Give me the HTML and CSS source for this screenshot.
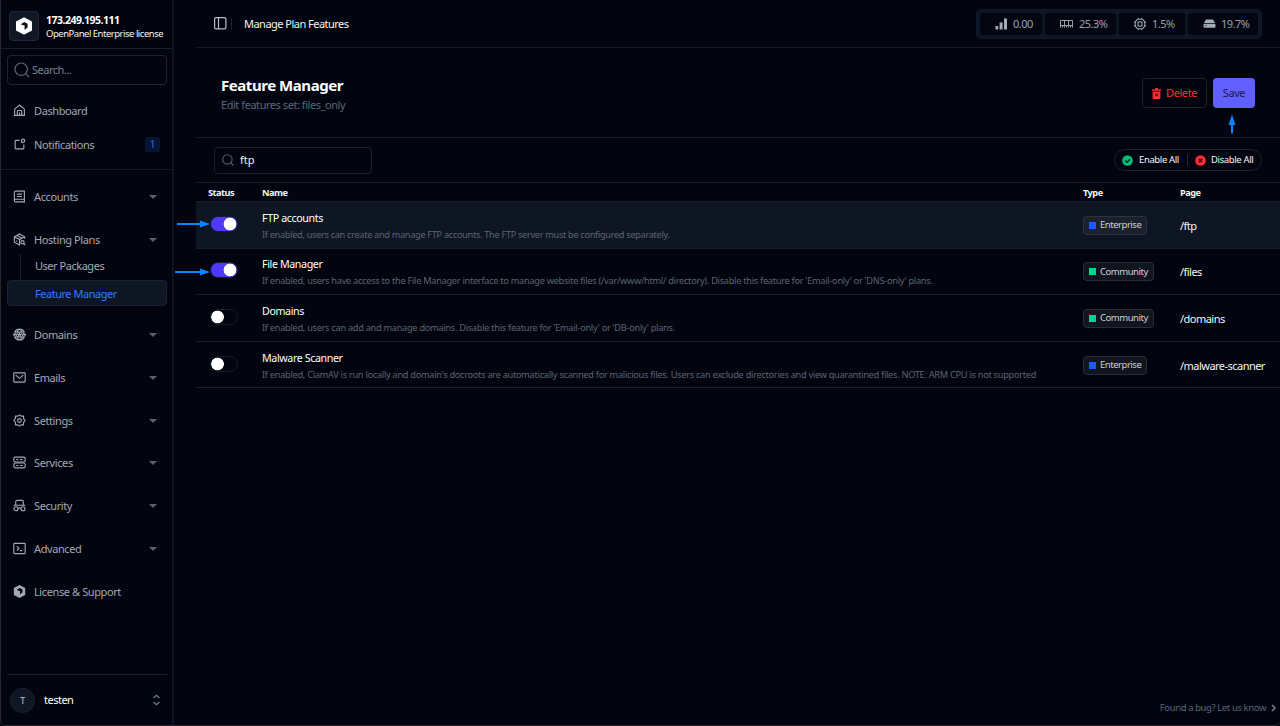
FILE: index.html
```html
<!DOCTYPE html>
<html lang="en">
<head>
<meta charset="utf-8">
<title>Manage Plan Features</title>
<link rel="stylesheet" href="styles.css">
</head>
<body>
<div class="app">
<aside class="sidebar">
  <div class="brand">
    <div class="brand-logo"><svg width="18" height="18" viewBox="0 0 18 18"><path fill="#fff" stroke="#fff" stroke-width="1.6" stroke-linejoin="round" d="M9 1.2 16.2 5v8L9 16.8 1.8 13V5z"/><path fill="#0b1220" d="M5.6 7.2 9.3 5l3.3 1.8v3.8l-3 2.3V8.6L7.4 7.9z"/></svg></div>
    <div class="brand-text"><strong><span class="t-ip">173.249.195.111</span></strong><span class="t-lic">OpenPanel Enterprise license</span></div>
  </div>
  <div class="side-search"><svg width="16" height="16" viewBox="0 0 16 16" fill="none" stroke="#5b6475" stroke-width="1.2"><circle cx="7.2" cy="7.2" r="6.2"/><path d="m11.7 11.7 3.6 3.6"/></svg><span>Search...</span></div>
  <nav class="nav">
    <a class="item dash"><svg class="ico" viewBox="0 0 24 24"><path d="M3 21V9.500L12 2l9 7.500V21zM8 21v-7.500q0-1.500 1.500-1.500h5q1.500 0 1.500 1.500V21M12 15.500V21"/></svg><span>Dashboard</span></a>
    <a class="item notif"><svg class="ico" viewBox="0 0 24 24"><path d="M12 4.500H5q-1 0-1 1V19q0 1 1 1h14q1 0 1-1v-7"/><circle cx="18.500" cy="5" r="3"/></svg><span>Notifications</span><b class="count">1</b></a>
    <hr class="rule">
    <a class="item first"><svg class="ico" viewBox="0 0 24 24"><path d="M5 2h16v20H5q-2.500 0-2.500-2.500V4.500Q2.500 2 5 2zM2.500 19.500Q2.500 17 5 17h16M7.500 7.500h9M7.500 12h9"/></svg><span>Accounts</span><i class="caret"></i></a>
    <a class="item"><svg class="ico" viewBox="0 0 24 24"><path d="M21.500 10.500V7L12 1.800 2.500 7v10l9.500 5.200V12M2.500 7l9.500 5 9.500-5M7.500 4.500l9 5M7 14v2"/><circle cx="17.500" cy="17" r="3"/><path d="m19.700 19.200 3 3"/></svg><span>Hosting Plans</span><i class="caret"></i></a>
    <div class="sub">
      <a class="sub-item">User Packages</a>
      <a class="sub-item active">Feature Manager</a>
    </div>
    <a class="item"><svg class="ico" viewBox="0 0 24 24"><path d="M3 7.500a10 10 0 0 1 18 0M3 16.500a10 10 0 0 0 18 0M8 7.500q1-5 4-5.500 3 .5 4 5.500M8 16.500q1 5 4 5.500 3-.5 4-5.500M2.500 7.500h19M2.500 16.500h19"/><path stroke-width="2" d="m0 10 2 4 2-4 2 4 2-4M8.500 10l2 4 1.500-4 1.500 4 2-4M16 10l2 4 2-4 2 4 2-4"/></svg><span>Domains</span><i class="caret"></i></a>
    <a class="item"><svg class="ico" viewBox="0 0 24 24"><rect x="1.500" y="3.500" width="21" height="17" rx="1.500"/><path d="m5 7.500 7 6 7-6"/></svg><span>Emails</span><i class="caret"></i></a>
    <a class="item"><svg class="ico" viewBox="0 0 24 24"><path stroke-linejoin="round" d="m12 1.500 3 2.500h4.500v4.500L22.500 12l-3 3.500V20H15l-3 2.500L9 20H4.500v-4.500L1.500 12l3-3.500V4H9z"/><circle cx="12" cy="12" r="3.500"/></svg><span>Settings</span><i class="caret"></i></a>
    <a class="item"><svg class="ico" viewBox="0 0 24 24"><rect x="1.500" y="2" width="21" height="9" rx="3"/><rect x="1.500" y="13" width="21" height="9" rx="3"/><path d="M6 6.500h4M6 17.500h4M13 6.500h5M13 17.500h5"/></svg><span>Services</span><i class="caret"></i></a>
    <a class="item"><svg class="ico" viewBox="0 0 24 24"><path d="M5 11V5.500Q5 2.500 7.500 2.500h9Q19 2.500 19 5.500V11M1 11.500h22M9.500 17.500q2.500-2 5 0"/><circle cx="5.500" cy="18" r="3.700"/><circle cx="18.500" cy="18" r="3.700"/></svg><span>Security</span><i class="caret"></i></a>
    <a class="item"><svg class="ico" viewBox="0 0 24 24"><rect x="1.500" y="2.500" width="21" height="19" rx="1.500"/><path d="m7 8 4 4-4 4M12.500 16H17"/></svg><span>Advanced</span><i class="caret"></i></a>
    <a class="item"><svg class="ico" viewBox="0 0 24 24"><path class="solid" d="M12 0 22.500 5.500v13L12 24 1.500 18.500v-13z"/><path class="hole" d="m7 8.700 5.500-3 5 2.600v5.300L13 17.500V11l-3.500-1z"/></svg><span>License &amp; Support</span></a>
  </nav>
  <div class="user"><div class="avatar">T</div><span>testen</span><svg width="9" height="12" viewBox="0 0 9 12" fill="none" stroke="#737c8d" stroke-width="1.100"><path d="m1.500 4 3-2.700 3 2.700M1.500 8l3 2.700 3-2.700"/></svg></div>
</aside>
<main class="main">
  <header class="topbar">
    <svg width="13" height="13" viewBox="0 0 13 13" fill="none" stroke="#b8bdc6" stroke-width="1.200"><rect x=".6" y=".6" width="11.300" height="11.300" rx="1.500"/><path d="M4.500.6v11.300"/></svg>
    <i class="vbar"></i>
    <span class="crumb">Manage Plan Features</span>
    <div class="stats">
      <div class="stat s1"><svg width="13" height="12" viewBox="0 0 13 12" fill="#a4abb8"><path d="M.5 8h2.800v3.500H.5zM4.600 4.500h3v7h-3zM9 .5h3v11H9z"/></svg><span>0.00</span></div>
      <div class="stat s2"><svg width="13" height="10" viewBox="0 0 13 10" fill="none" stroke="#98a0ae"><path d="M.5 1.500h12v5H.5zM4.500 1v5.500M8.500 1v5.500M.5 6v2.500M2.500 6v2.500M4.500 6v2.500M8.500 6v2.500M10.500 6v2.500M12.500 6v2.500M6.500 6v2.500"/></svg><span>25.3%</span></div>
      <div class="stat s3"><svg width="12" height="12" viewBox="0 0 12 12" fill="none" stroke="#98a0ae" stroke-width="1.100"><path d="M3.500 1.300h5l2.200 2.200v5l-2.200 2.200h-5L1.300 8.500v-5z"/><rect x="4" y="4" width="4" height="4"/><path d="M4.500 0v1M7.500 0v1M4.500 11v1M7.500 11v1M0 4.500h1M0 7.500h1M11 4.500h1M11 7.500h1"/></svg><span>1.5%</span></div>
      <div class="stat s4"><svg width="13" height="9" viewBox="0 0 13 9"><path fill="#a4abb8" d="M3 .5h7L12 4H1zM1.500 4.700h10q1 0 1 1v2q0 1-1 1h-10q-1 0-1-1v-2q0-1 1-1z"/><path stroke="#3b4353" d="M2 6.700h1.500"/></svg><span>19.7%</span></div>
    </div>
  </header>
  <section class="heading">
    <div class="titles"><h1><span class="t-h1">Feature Manager</span></h1><p><span class="t-sub">Edit features set: files_only</span></p></div>
    <div class="actions">
      <button class="btn delete"><svg width="9" height="11" viewBox="0 0 9 11"><path fill="#fb2c36" d="M3 0h3v1.300h3v1.500H0V1.300h3zM.6 3.500h7.800V10q0 1-1 1H1.600q-1 0-1-1z"/><path stroke="#1a0410" stroke-width="1" d="m3.200 5.500 2.600 2.800M5.800 5.500 3.200 8.300"/></svg><span>Delete</span></button>
      <button class="btn save"><span>Save</span></button>
    </div>
  </section>
  <section class="tools">
    <div class="filter"><svg width="12" height="12" viewBox="0 0 12 12" fill="none" stroke="#515b6d" stroke-width="1.100"><circle cx="5.400" cy="5.400" r="4.700"/><path d="m8.700 8.700 2.800 2.800"/></svg><span>ftp</span></div>
    <div class="bulk">
      <svg width="11" height="11" viewBox="0 0 11 11"><circle cx="5.500" cy="5.500" r="5.300" fill="#00bc7d"/><path fill="none" stroke="#04251f" stroke-width="1.400" d="M3.200 5.600 4.900 7.200 7.900 4.200"/></svg><span class="t-en">Enable All</span><i></i>
      <svg width="11" height="11" viewBox="0 0 11 11"><circle cx="5.500" cy="5.500" r="5.300" fill="#fb2c36"/><path stroke="#3a0713" stroke-width="1.300" d="m3.800 3.800 3.400 3.400M7.200 3.800 3.800 7.200"/></svg><span class="t-dis">Disable All</span>
    </div>
  </section>
  <div class="table">
    <div class="row head"><span>Status</span><span>Name</span><span>Type</span><span>Page</span></div>
    <div class="row hover"><i class="toggle on"></i><div class="feat"><b>FTP accounts</b><small><span class="d1">If enabled, users can create and manage FTP accounts. The FTP server must be configured separately.</span></small></div><div><span class="tag ent">Enterprise</span></div><span class="page">/ftp</span></div>
    <div class="row"><i class="toggle on"></i><div class="feat"><b>File Manager</b><small><span class="d2">If enabled, users have access to the File Manager interface to manage website files (/var/www/html/ directory). Disable this feature for 'Email-only' or 'DNS-only' plans.</span></small></div><div><span class="tag com">Community</span></div><span class="page">/files</span></div>
    <div class="row"><i class="toggle"></i><div class="feat"><b>Domains</b><small><span class="d3">If enabled, users can add and manage domains. Disable this feature for 'Email-only' or 'DB-only' plans.</span></small></div><div><span class="tag com">Community</span></div><span class="page">/domains</span></div>
    <div class="row"><i class="toggle"></i><div class="feat"><b>Malware Scanner</b><small><span class="d4">If enabled, ClamAV is run locally and domain's docroots are automatically scanned for malicious files. Users can exclude directories and view quarantined files. NOTE: ARM CPU is not supported</span></small></div><div><span class="tag ent">Enterprise</span></div><span class="page">/malware-scanner</span></div>
  </div>
  <footer class="bug"><span>Found a bug? Let us know</span><svg width="5" height="8" viewBox="0 0 5 8" fill="none" stroke="#8791a3" stroke-width="1.200"><path d="m1 1 3 3-3 3"/></svg></footer>
</main>
<svg class="pointer p1" width="35" height="8" viewBox="0 0 35 8"><path fill="#0a84ff" d="M1 3h23V.5L34 4 24 7.500V5H1z"/></svg>
<svg class="pointer p2" width="37" height="8" viewBox="0 0 37 8"><path fill="#0a84ff" d="M1 3h25V.5L36 4 26 7.500V5H1z"/></svg>
<svg class="pointer p3" width="8" height="20" viewBox="0 0 8 20"><path fill="#0a84ff" d="M4 .5 7.500 11H5v8.500H3V11H.5z"/></svg>
</div>
</body>
</html>
```
FILE: styles.css
```css
* { box-sizing: border-box; }
body { margin: 0; background: #030610; color: #f3f4f6; font-family: "Noto Sans", "Open Sans", sans-serif; font-size: 11px; line-height: 14px; }
span { white-space: nowrap; }
svg { flex: none; display: block; }
.app { position: relative; display: flex; width: 1280px; height: 726px; overflow: hidden; border-left: 1px solid #25272d; border-bottom: 1px solid #2b2830; border-radius: 0 0 5px 5px; background: #020510; }

.sidebar { width: 173px; flex: none; display: flex; flex-direction: column; border-right: 2px solid #0d1422; }
.brand { height: 49px; display: flex; align-items: center; padding: 4px 0 0 8px; gap: 7px; border-bottom: 1px solid #182131; }
.brand-logo { width: 30px; height: 30px; display: flex; align-items: center; justify-content: center; background: #101726; border: 1px solid #1e2735; border-radius: 4px; }
.brand-text { display: flex; flex-direction: column; padding-top: 1px; }
.brand-text strong { font-size: 10.500px; line-height: 14px; letter-spacing: -.6px; color: #fff; }
.brand-text strong { letter-spacing: -.5px; }
.t-lic { font-size: 9.500px; line-height: 13px; letter-spacing: -.49px; }
.side-search { height: 30px; margin: 6px 5px 0 6px; padding: 0 0 0 6px; display: flex; align-items: center; gap: 2px; border: 1px solid #1c2433; border-radius: 4px; color: #79818f; letter-spacing: -.5px; }
.nav { padding-top: 14px; }
.item { height: 24px; margin-bottom: 18.750px; padding: 0 15px 0 12px; display: flex; align-items: center; gap: 8px; color: #a2a8b4; font-size: 11px; letter-spacing: -.4px; }
.item.dash { margin-bottom: 9.500px; }
.item.notif { margin-bottom: 0; padding-right: 12px; }
.ico { width: 13px; height: 13px; margin-top: -1px; fill: none; stroke: #a2a8b4; stroke-width: 2.100; }
.ico .solid { fill: #a2a8b4; stroke: none; }
.ico .hole { fill: #020510; stroke: none; }
.caret { margin-left: auto; border: 4px solid transparent; border-top-color: #596273; border-bottom: 0; }
.count { margin-left: auto; width: 15px; height: 15px; line-height: 15px; text-align: center; border-radius: 2px; background: #071532; color: #2b6ff0; font-size: 10px; font-weight: 400; }
.rule { height: 1px; margin: 12.500px 0 15px; border: 0; background: #141c2b; }
.sub { margin: -18px 5px 17.500px 6px; background: linear-gradient(#1a2232, #1a2232) 13px 1px / 1px 27px no-repeat; }
.sub-item { display: block; height: 27px; padding: 0 0 0 28px; line-height: 26px; color: #a2a8b4; letter-spacing: -.47px; }
.sub-item.active { height: 26px; line-height: 25px; background: #0f1623; border: 1px solid #182234; border-radius: 4px; color: #2b7fff; padding-left: 27px; }
.user { margin: auto 5px 0 6px; height: 51px; display: flex; align-items: center; padding: 0 6px 0 3px; border-top: 1px solid #182131; color: #fff; letter-spacing: -.5px; }
.user svg { margin-left: auto; }
.avatar { width: 25px; height: 25px; line-height: 23px; margin-right: 9px; text-align: center; font-size: 9px; border: 1px solid #1a2332; background: #0f1624; border-radius: 50%; color: #bfc4cd; }

.main { flex: 1; margin-left: 22px; display: flex; flex-direction: column; min-width: 0; }
.topbar { height: 48px; display: flex; align-items: center; padding: 0 18px; border-bottom: 1px solid #131a28; }
.vbar { width: 1px; height: 12px; background: #202735; margin: 0 12px 0 4px; }
.crumb { font-size: 11px; letter-spacing: -.52px; }
.stats { margin-left: auto; display: flex; gap: 3px; padding: 3px; background: #0e1624; border-radius: 5px; border: 1px solid #101929; }
.stat { height: 22px; display: flex; align-items: center; gap: 6px; background: #030611; border-radius: 3px; color: #98a0ae; letter-spacing: -.5px; padding: 1px 0 0 16px; }
.stat svg { margin: -1px 0 0 -1px; }
.s1 { width: 62px; } .s2 { width: 71px; } .s3 { width: 66px; } .s4 { width: 70px; }
.s1, .s4 { gap: 5px; }

.heading { height: 90px; display: flex; justify-content: space-between; align-items: center; padding: 0 25px 0 25px; border-bottom: 1px solid #161d2b; }
.titles { padding-top: 3px; }
h1 { margin: 0; font-size: 15px; line-height: 20px; letter-spacing: -.45px; color: #fff; }
p { margin: 2px 0 0; color: #596579; font-size: 11px; line-height: 16px; letter-spacing: -.45px; }
.actions { display: flex; gap: 6px; }
.btn { height: 30px; display: flex; align-items: center; justify-content: center; gap: 5px; font: inherit; letter-spacing: -.42px; border-radius: 4px; padding: 1px 0 0; }
.delete { width: 65px; border: 1px solid #1b2433; background: transparent; color: #fb2c36; }
.save { width: 42px; border: 0; background: #615fff; color: #1b1948; }
.tools { height: 45px; display: flex; align-items: center; justify-content: space-between; padding: 0 18px; border-bottom: 1px solid #161d2b; }
.filter { width: 158px; height: 27px; display: flex; align-items: center; gap: 6px; padding-left: 7px; border: 1px solid #1b2230; border-radius: 4px; }
.bulk { width: 148px; height: 22px; display: flex; align-items: center; padding-left: 7px; border: 1px solid #1b2433; border-radius: 11px; font-size: 9.500px; letter-spacing: -.37px; }
.bulk span { margin-left: 6px; width: 41px; }
.bulk i { width: 1px; height: 12px; background: #242c3b; margin: 0 7px 0 7px; }
.bulk .t-dis { margin-left: 5px; }

.row { height: 46.600px; display: grid; grid-template-columns: 54px 821px 97px 1fr; align-items: center; padding-left: 12px; border-bottom: 1px solid #161f2d; }
.head { height: 19px; font-size: 9.200px; font-weight: 700; letter-spacing: -.5px; padding-top: 1px; }
.hover { background: #0f1623; }
.toggle { width: 28px; height: 16px; margin: -2px 0 0 2px; border: 1px solid #151e2d; border-radius: 8px; background: radial-gradient(circle at 6.500px 7px, #fff 6px, transparent 6.700px); }
.toggle.on { border-color: #151b3c; background: radial-gradient(circle at 19px 7px, #fff 6px, #4f39f6 6.700px); }
.feat { display: flex; flex-direction: column; padding-top: 2px; }
.feat b { font-weight: 400; font-size: 10.700px; line-height: 16px; letter-spacing: -.39px; color: #fff; }
.feat small { font-size: 9.200px; line-height: 15px; margin-top: 1px; color: #5c6372; letter-spacing: -.27px; }
.feat small .d1 { letter-spacing: -.31px; }
.tag { display: inline-flex; align-items: center; gap: 4px; height: 19px; padding: 0 5px; border: 1px solid #292d37; border-radius: 4px; background: #12151f; font-size: 9.500px; letter-spacing: -.47px; color: #cdd0d6; }
.row > div { padding-top: 1px; }
.row > .feat { padding-top: 2px; }
.hover .tag { background: #1a212d; border-color: #2b3340; }
.tag::before { content: ""; width: 7px; height: 7px; background: #155dfc; }
.tag.com::before { background: #00d492; }
.page { letter-spacing: -.53px; padding-top: 2px; }
.bug { margin-top: auto; height: 34px; display: flex; align-items: center; justify-content: flex-end; gap: 5px; padding-right: 4px; font-size: 9.500px; letter-spacing: -.4px; color: #596377; }

/* Callout arrows laid over the interface */
.pointer { position: absolute; }
.p1 { left: 175px; top: 220px; }
.p2 { left: 173px; top: 268px; }
.p3 { left: 1227px; top: 114px; }
```
